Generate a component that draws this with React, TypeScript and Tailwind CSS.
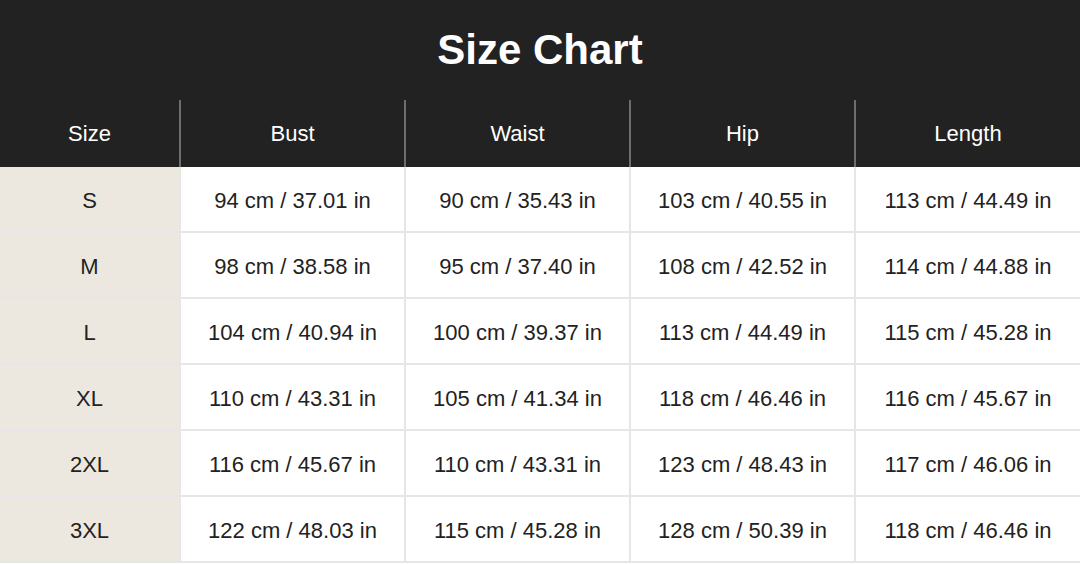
const cols = ["Size", "Bust", "Waist", "Hip", "Length"];

const rows = [
  ["S", "94 cm / 37.01 in", "90 cm / 35.43 in", "103 cm / 40.55 in", "113 cm / 44.49 in"],
  ["M", "98 cm / 38.58 in", "95 cm / 37.40 in", "108 cm / 42.52 in", "114 cm / 44.88 in"],
  ["L", "104 cm / 40.94 in", "100 cm / 39.37 in", "113 cm / 44.49 in", "115 cm / 45.28 in"],
  ["XL", "110 cm / 43.31 in", "105 cm / 41.34 in", "118 cm / 46.46 in", "116 cm / 45.67 in"],
  ["2XL", "116 cm / 45.67 in", "110 cm / 43.31 in", "123 cm / 48.43 in", "117 cm / 46.06 in"],
  ["3XL", "122 cm / 48.03 in", "115 cm / 45.28 in", "128 cm / 50.39 in", "118 cm / 46.46 in"],
];

export default function App() {
  return (
    <div className="w-[1080px] h-[564px] bg-white font-['Liberation_Sans',Arial,sans-serif] overflow-hidden">
      <div className="bg-[#222222]">
        <h1 className="h-[100px] flex items-center justify-center text-white font-bold text-[42px] pb-[2px]">
          Size Chart
        </h1>
        <div className="grid grid-cols-[181px_225px_225px_225px_224px] h-[67px]">
          {cols.map((c, i) => (
            <div
              key={c}
              className={
                "flex items-center justify-center text-white text-[22px] " +
                (i < 4 ? "border-r-2 border-[#6e6e6e]" : "")
              }
            >
              {c}
            </div>
          ))}
        </div>
      </div>
      {rows.map((r) => (
        <div key={r[0]} className="grid grid-cols-[181px_225px_225px_225px_224px] h-[66px] border-b-2 border-[#e6e6e6]">
          {r.map((v, i) => (
            <div
              key={i}
              className={
                "flex items-center justify-center text-[22px] text-[#222222] pt-[2px] " +
                (i === 0 ? "bg-[#ece8df] " : "") +
                (i < 4 ? "border-r-2 border-[#e6e6e6]" : "")
              }
            >
              {v}
            </div>
          ))}
        </div>
      ))}
    </div>
  );
}
